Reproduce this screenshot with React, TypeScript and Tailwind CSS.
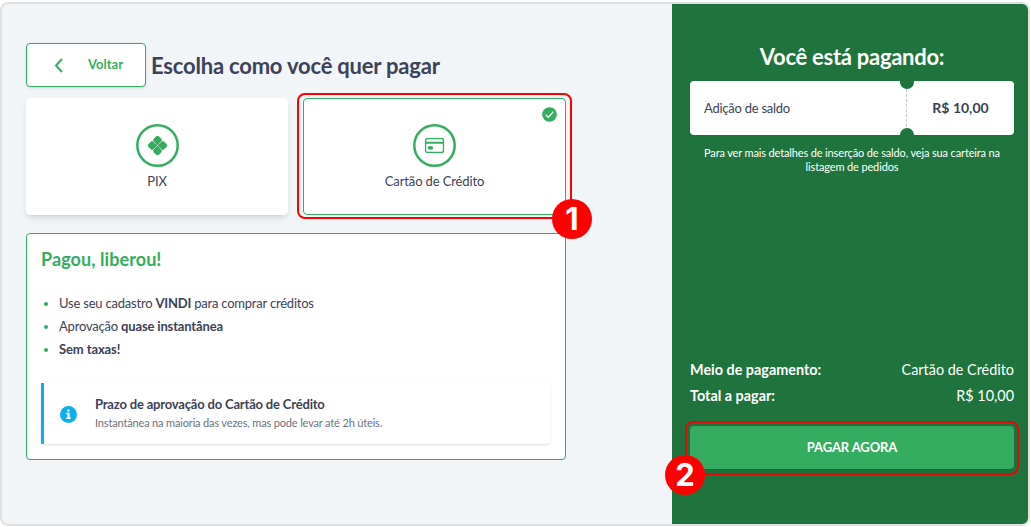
import React, { useState } from "react";

const METHODS = [
  { id: "pix", label: "PIX" },
  { id: "card", label: "Cartão de Crédito" },
];

const PixIcon = () => (
  <svg viewBox="0 0 20 20" className="h-5 w-5" fill="currentColor">
    <g transform="rotate(45 10 10)">
      <rect x="2.6" y="2.6" width="7.2" height="7.2" rx="1.8" />
      <rect x="10.2" y="2.6" width="7.2" height="7.2" rx="1.8" />
      <rect x="2.6" y="10.2" width="7.2" height="7.2" rx="1.8" />
      <rect x="10.2" y="10.2" width="7.2" height="7.2" rx="1.8" />
      <path d="M7.5 7.5h2.3v2.3H7.5zM10.2 7.5h2.3v2.3h-2.3zM7.5 10.2h2.3v2.3H7.5zM10.2 10.2h2.3v2.3h-2.3z" />
    </g>
  </svg>
);

const CardIcon = () => (
  <svg viewBox="0 0 20 16" className="h-4 w-5" fill="none" stroke="currentColor">
    <rect x="1" y="1" width="18" height="14" rx="2" strokeWidth="1.4" />
    <path d="M1 5.2h18" strokeWidth="2" />
    <rect x="3.4" y="8.8" width="5" height="3.2" rx="1" fill="currentColor" stroke="none" />
  </svg>
);

const Step: React.FC<{ n: number; className: string }> = ({ n, className }) => (
  <span
    className={`absolute z-10 flex h-10 w-10 items-center justify-center rounded-full bg-[#ff0000] pb-0.5 font-[Inter,sans-serif] text-[31px] leading-none font-bold text-white ${className}`}
  >
    {n}
  </span>
);

const App: React.FC = () => {
  const [method, setMethod] = useState("card");

  return (
    <div className="h-[527px] w-[1031px] bg-white pt-0.5 font-[Lato,sans-serif] text-[#3c4257]">
      <div className="flex h-[524px] w-[1030px] overflow-hidden rounded-lg border-2 border-[#e1e1e1] bg-[#f1f5f8]">
        <main className="w-[670px] pt-[39px] pl-6">
          <div className="flex items-center gap-[5px]">
            <button className="flex h-11 w-[120px] items-center rounded border border-[#35ad60] bg-white pl-[27px] text-[13px] font-bold text-[#35ad60] shadow">
              <svg viewBox="0 0 9 15" className="h-[15px] w-[9px]" fill="none" stroke="currentColor" strokeWidth="2">
                <path d="M8 1 2 7.5 8 14" />
              </svg>
              <span className="ml-[25px]">Voltar</span>
            </button>
            <h1 className="pt-0.5 text-[22px] leading-7 font-bold tracking-[-0.2px] whitespace-nowrap">
              Escolha como você quer pagar
            </h1>
          </div>

          {/* Payment methods */}
          <div className="mt-[11px] flex gap-[15px]">
            {METHODS.map((m) => (
              <div key={m.id} className="relative">
                <button
                  onClick={() => setMethod(m.id)}
                  className={`flex h-[117px] flex-col items-center rounded border bg-white pt-[25px] ${
                    method === m.id ? "w-[263px] border-[#35ad60]" : "w-[262px] border-white shadow-md"
                  }`}
                >
                  <svg viewBox="0 0 43 43" className="h-[43px] w-[43px] text-[#35ad60]">
                    <circle cx="21.5" cy="21.5" r="20.2" fill="none" stroke="currentColor" strokeWidth="2.5" />
                    <g transform={m.id === "pix" ? "translate(11.5 11.5)" : "translate(11.5 13.5)"}>
                      <svg width="20" height={m.id === "pix" ? 20 : 16}>
                        {m.id === "pix" ? <PixIcon /> : <CardIcon />}
                      </svg>
                    </g>
                  </svg>
                  <span className="mt-[5px] text-[13px] leading-[18px] tracking-[-0.12px]">{m.label}</span>
                </button>
                {method === m.id && (
                  <>
                    <svg viewBox="0 0 15 15" className="absolute top-[9px] right-[9px] h-[15px] w-[15px]">
                      <circle cx="7.5" cy="7.5" r="7.3" fill="#35ad60" />
                      <path d="m3.8 7.8 2.5 2.6 5-5.6" fill="none" stroke="#fff" strokeWidth="1.3" />
                    </svg>
                    <span className="pointer-events-none absolute -inset-x-1.5 -top-[5px] -bottom-1 rounded-lg border-2 border-[#ff0000]" />
                    <Step n={1} className="top-[101px] right-[-26px]" />
                  </>
                )}
              </div>
            ))}
          </div>

          <section className="mt-[18px] h-[227px] w-[540px] rounded border border-[#35ad60] bg-white px-3.5 pt-[11px]">
            <h2 className="text-[18px] leading-7 font-bold tracking-[0.08px] text-[#35ad60]">Pagou, liberou!</h2>
            <ul className="mt-[19px] text-[13px] leading-[23px] tracking-[-0.21px]">
              {[
                <>Use seu cadastro <b>VINDI</b> para comprar créditos</>,
                <>Aprovação <b className="tracking-[-0.15px]">quase instantânea</b></>,
                <b className="tracking-[-0.1px]">Sem taxas!</b>,
              ].map((text, i) => (
                <li key={i} className="flex items-center gap-[11px] pl-[3px]">
                  <span className="h-1 w-1 rounded-full bg-[#35ad60]" />
                  <span>{text}</span>
                </li>
              ))}
            </ul>

            <div className="mt-[22px] flex h-[61px] w-[509px] items-center rounded-r border-l-3 border-[#0eb0ec] bg-white pl-4 shadow">
              <svg viewBox="0 0 17 17" className="mt-0.5 h-[17px] w-[17px] shrink-0">
                <circle cx="8.5" cy="8.5" r="8.5" fill="#0eb0ec" />
                <path d="M7.3 3.5h2.2v2H7.3zM6.2 6.8h3.4v4.7h1.2V13H6.2v-1.5h1.3V8.2H6.2z" fill="#fff" />
              </svg>
              <div className="ml-[18px]">
                <p className="text-[13px] leading-[19px] font-bold tracking-[-0.18px]">
                  Prazo de aprovação do Cartão de Crédito
                </p>
                <p className="text-[11px] leading-[18px] tracking-[-0.16px] text-[#6b7280]">
                  Instantânea na maioria das vezes, mas pode levar até 2h úteis.
                </p>
              </div>
            </div>
          </section>
        </main>

        {/* Order summary */}
        <aside className="flex flex-1 flex-col bg-[#1e743c] pt-[37px] pr-3.5 pl-[18px] text-white">
          <h2 className="text-center text-[22px] leading-8 font-bold tracking-[-0.28px]">Você está pagando:</h2>
          <div className="relative mt-2 flex h-[54px] items-center overflow-hidden rounded bg-white text-[#3c4257]">
            <span className="flex-1 pt-px pl-3.5 text-[13px] tracking-[-0.25px]">Adição de saldo</span>
            <span className="my-2 self-stretch border-l border-dashed border-[#c5c9d3]" />
            <span className="w-[107px] pb-0.5 text-center text-[14px] font-bold">R$ 10,00</span>
            <span className="absolute -top-1.5 right-[100px] h-3.5 w-3.5 rounded-full bg-[#1e743c]" />
            <span className="absolute right-[100px] -bottom-[7px] h-3.5 w-3.5 rounded-full bg-[#1e743c]" />
          </div>
          <p className="mt-[11px] text-center text-[11px] leading-[14px] tracking-[-0.14px]">
            Para ver mais detalhes de inserção de saldo, veja sua carteira na
            <br />
            listagem de pedidos
          </p>

          <dl className="mt-[183px] text-[14.4px] leading-[26px]">
            <div className="flex justify-between">
              <dt className="font-bold">Meio de pagamento:</dt>
              <dd>Cartão de Crédito</dd>
            </div>
            <div className="flex justify-between">
              <dt className="font-bold">Total a pagar:</dt>
              <dd>R$ 10,00</dd>
            </div>
          </dl>
          <div className="relative mt-[17px]">
            <button className="block h-[43px] w-full rounded bg-[#35ad60] text-[13px] font-bold tracking-[-0.1px] shadow">
              PAGAR AGORA
            </button>
            <span className="pointer-events-none absolute -inset-x-[5px] -top-[5px] -bottom-[6px] rounded-lg border-2 border-[#e00c0a]" />
            <Step n={2} className="top-[29px] left-[-25px]" />
          </div>
        </aside>
      </div>
    </div>
  );
};

export default App;
